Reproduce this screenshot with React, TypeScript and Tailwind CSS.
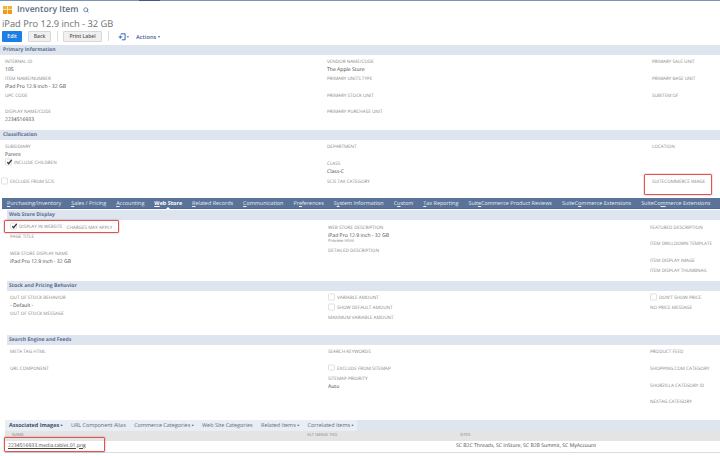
import type { ReactNode } from "react"
import { Search } from "lucide-react"

// Field label with an optional value below it
function Field({ label, value, className = "h-[16.8px]" }: { label: string; value?: string; className?: string }) {
  return (
    <div className={className}>
      <div className="h-[7px] text-[4.6px] leading-[7px] whitespace-nowrap text-[#7f7f7f]">{label}</div>
      {value && <div className="h-[7px] text-[5.1px] leading-[8px] whitespace-nowrap text-[#3d3d3d]">{value}</div>}
    </div>
  )
}

function Check({ label, checked = false, className = "h-[16.8px]" }: { label: string; checked?: boolean; className?: string }) {
  return (
    <div className={`flex items-start ${className}`}>
      <div className="relative mr-[2.5px] h-[6.5px] w-[6.5px] shrink-0 -translate-y-[1.5px] rounded-[1px] border border-[#e0e0e0] bg-white">
        {checked && (
          <svg viewBox="0 0 8 8" className="absolute -top-[1px] left-0 h-[7px] w-[7px]">
            <path d="M1.5 4.2 L3 6 L6.5 1.5" fill="none" stroke="#333" strokeWidth="1.5" />
          </svg>
        )}
      </div>
      <span className="text-[4.6px] leading-[7px] whitespace-nowrap text-[#7f7f7f]">{label}</span>
    </div>
  )
}

function SectionBar({ children, className = "" }: { children: ReactNode; className?: string }) {
  return (
    <div className={`flex h-[10px] items-center bg-[#dfe5ef] pt-[2px] text-[5.1px] font-bold text-[#5a6f91] ${className}`}>
      {children}
    </div>
  )
}

function Tab({ first, rest, pre = "", active = false }: { first: string; rest: string; pre?: string; active?: boolean }) {
  return (
    <span className={`relative whitespace-nowrap ${active ? "font-bold text-white" : "text-[#e8edf5]"}`}>
      {pre}
      <span className="underline">{first}</span>
      {rest}
      {active && (
        <span className="absolute -bottom-[1.5px] left-1/2 h-0 w-0 -translate-x-1/2 border-x-[2px] border-b-[2px] border-x-transparent border-b-white" />
      )}
    </span>
  )
}

function RedBox({ className }: { className: string }) {
  return <div className={`pointer-events-none absolute rounded-[1px] border border-[#e8504f] shadow-[0_0_2px_rgba(0,0,0,0.35)] ${className}`} />
}

export default function App() {
  return (
    <div className="relative h-[456px] w-[720px] overflow-hidden bg-white font-['Open_Sans',sans-serif] antialiased [text-rendering:geometricPrecision]">
      <div className="h-px bg-[#7d94b8]">
        <div className="ml-[139px] h-px w-[21px] bg-[#3f5a85]" />
      </div>

      {/* Page title */}
      <div className="flex h-[16px] items-center pt-[1px] pl-[3px]">
        <svg viewBox="0 0 9 8" className="h-[8px] w-[9px]">
          <rect x="0" y="0" width="4.2" height="3.4" fill="#f5b335" />
          <rect x="4.8" y="0" width="4.2" height="3.4" fill="#f5b335" />
          <rect x="0" y="4" width="4.2" height="4" fill="#ee9a1c" />
          <rect x="4.8" y="4" width="4.2" height="4" fill="#ee9a1c" />
        </svg>
        <span className="ml-[5px] text-[8.6px] font-semibold text-[#5b6a80]">Inventory Item</span>
        <Search className="ml-[5px] h-[6px] w-[6px] text-[#4d6a9a]" strokeWidth={3} />
      </div>
      <div className="h-[14px] pl-[2px] text-[9.3px] leading-[14px] text-[#6f6f6f]">iPad Pro 12.9 inch - 32 GB</div>

      {/* Buttons */}
      <div className="flex h-[14px] items-start pl-[2px] text-[5px] font-semibold">
        <button className="h-[11px] w-[20px] rounded-[1px] bg-[#1b7fe6] text-white">Edit</button>
        <button className="ml-[6px] h-[11px] w-[23px] rounded-[1px] border border-[#d8d8d8] bg-[#f0f0f0] text-[#555]">Back</button>
        <div className="mx-[5.5px] h-[10px] w-px bg-[#dcdcdc]" />
        <button className="h-[11px] w-[39px] rounded-[1px] border border-[#d8d8d8] bg-[#f0f0f0] text-[#555]">Print Label</button>
        <div className="mx-[6px] h-[10px] w-px bg-[#dcdcdc]" />
        <svg viewBox="0 0 14 10" className="ml-[2px] mt-[2px] h-[8px] w-[13px]">
          <path d="M4 2 V1 H9 V8.5 H5 M1 5 H5.5 M3 3.2 V7" fill="none" stroke="#2f5da8" strokeWidth="1.2" />
          <path d="M11 4 H14 L12.5 5.8 Z" fill="#4d6a9a" />
        </svg>
        <span className="ml-[6px] mt-[2px] flex items-center text-[5.7px] text-[#4d6a9a]">
          Actions
          <span className="ml-[1.5px] h-0 w-0 border-x-[1.5px] border-t-[2px] border-x-transparent border-t-[#4d6a9a]" />
        </span>
      </div>

      <SectionBar className="pl-[3px]">Primary Information</SectionBar>
      <div className="flex h-[75px] pt-[4px]">
        <div className="w-[327px] pl-[5px]">
          <Field label="INTERNAL ID" value="105" />
          <Field label="ITEM NAME/NUMBER" value="iPad Pro 12.9 inch - 32 GB" />
          <Field label="UPC CODE" />
          <Field label="DISPLAY NAME/CODE" value="2234516933" />
        </div>
        <div className="w-[325px]">
          <Field label="VENDOR NAME/CODE" value="The Apple Store" />
          <Field label="PRIMARY UNITS TYPE" />
          <Field label="PRIMARY STOCK UNIT" />
          <Field label="PRIMARY PURCHASE UNIT" />
        </div>
        <div>
          <Field label="PRIMARY SALE UNIT" />
          <Field label="PRIMARY BASE UNIT" />
          <Field label="SUBITEM OF" />
        </div>
      </div>

      <SectionBar className="pl-[3px]">Classification</SectionBar>
      <div className="flex h-[58px] pt-[4px]">
        <div className="w-[327px] pl-[5px]">
          <Field label="SUBSIDIARY" value="Parent" className="h-[16px]" />
          <Check label="INCLUDE CHILDREN" checked className="h-[19px]" />
          <div className="-ml-[4px]">
            <Check label="EXCLUDE FROM SCIS" />
          </div>
        </div>
        <div className="w-[325px]">
          <Field label="DEPARTMENT" className="h-[17px]" />
          <Field label="CLASS" value="Class-C" className="h-[18px]" />
          <Field label="SCIS TAX CATEGORY" />
        </div>
        <div>
          <Field label="LOCATION" className="h-[35px]" />
          <Field label="SUITECOMMERCE IMAGE" />
        </div>
      </div>

      {/* Subtabs */}
      <div className="ml-[2px] flex h-[11px] items-center gap-[10px] border-b border-[#4d6a9a] bg-[#5b7299] pl-[5px] text-[5.45px]">
        <Tab first="P" rest="urchasing/Inventory" />
        <Tab first="S" rest="ales / Pricing" />
        <Tab first="A" rest="ccounting" />
        <Tab first="W" rest="eb Store" active />
        <Tab first="R" rest="elated Records" />
        <Tab first="C" rest="ommunication" />
        <Tab pre="Pr" first="e" rest="ferences" />
        <Tab pre="S" first="y" rest="stem Information" />
        <Tab pre="C" first="u" rest="stom" />
        <Tab first="T" rest="ax Reporting" />
        <Tab pre="Suit" first="e" rest="Commerce Product Reviews" />
        <Tab pre="SuiteC" first="o" rest="mmerce Extensions" />
        <Tab pre="SuiteCo" first="m" rest="merce Extensions" />
      </div>

      <div className="ml-[7px] pt-[1px]">
        <SectionBar className="pl-[2px]">Web Store Display</SectionBar>
        <div className="flex h-[61px] pt-[3px]">
          <div className="w-[321px] pl-[3px]">
            <div className="flex h-[11px] pt-[1px]">
              <Check label="DISPLAY IN WEBSITE" checked className="h-[7px]" />
              <span className="ml-[4px] pt-[1px] text-[4.6px] leading-[7px] text-[#7f7f7f]">CHARGES MAY APPLY</span>
            </div>
            <Field label="PAGE TITLE" className="h-[16.5px]" />
            <Field label="WEB STORE DISPLAY NAME" value="iPad Pro 12.9 inch - 32 GB" />
          </div>
          <div className="w-[322px] pt-[1.5px]">
            <Field label="WEB STORE DESCRIPTION" value="iPad Pro 12.9 inch - 32 GB" className="h-[14px]" />
            <div className="h-[9.5px] text-[4.2px] leading-[6px] text-[#7f7f7f]">Preview Html</div>
            <Field label="DETAILED DESCRIPTION" />
          </div>
          <div className="pt-[1.5px]">
            <Field label="FEATURED DESCRIPTION" />
            <Field label="ITEM DRILLDOWN TEMPLATE" />
            <Field label="ITEM DISPLAY IMAGE" className="h-[10px]" />
            <Field label="ITEM DISPLAY THUMBNAIL" />
          </div>
        </div>

        <SectionBar className="pl-[2px]">Stock and Pricing Behavior</SectionBar>
        <div className="flex h-[44px] pt-[4px]">
          <div className="w-[321px] pl-[3px]">
            <Field label="OUT OF STOCK BEHAVIOR" value="- Default -" className="h-[16px]" />
            <Field label="OUT OF STOCK MESSAGE" />
          </div>
          <div className="w-[322px]">
            <Check label="VARIABLE AMOUNT" className="h-[10px]" />
            <Check label="SHOW DEFAULT AMOUNT" className="h-[10px]" />
            <Field label="MAXIMUM VARIABLE AMOUNT" />
          </div>
          <div>
            <Check label="DON'T SHOW PRICE" className="h-[9.5px]" />
            <Field label="NO PRICE MESSAGE" />
          </div>
        </div>

        <SectionBar className="pl-[2px]">Search Engine and Feeds</SectionBar>
        <div className="flex h-[75px] pt-[4px]">
          <div className="w-[321px] pl-[3px]">
            <Field label="META TAG HTML" />
            <Field label="URL COMPONENT" />
          </div>
          <div className="w-[322px]">
            <Field label="SEARCH KEYWORDS" />
            <Check label="EXCLUDE FROM SITEMAP" className="h-[10px]" />
            <Field label="SITEMAP PRIORITY" value="Auto" />
          </div>
          <div>
            <Field label="PRODUCT FEED" />
            <Field label="SHOPPING.COM CATEGORY" />
            <Field label="SHORZILLA CATEGORY ID" />
            <Field label="NEXTAG CATEGORY" />
          </div>
        </div>
      </div>

      {/* Associated images sublist */}
      <div className="ml-[5px]">
        <div className="flex h-[11px] items-center bg-[#dfe5ef] text-[5.45px] text-[#5f6b7e]">
          <div className="flex h-full items-center gap-[8.5px] bg-[#e9edf4] pl-[4px] pr-[4px]">
            <span className="font-bold text-[#3f4f68]">Associated Images ▪</span>
            <span>URL Component Alias</span>
            <span>Commerce Categories ▪</span>
            <span>Web Site Categories</span>
            <span>Related Items ▪</span>
            <span>Correlated Items ▪</span>
          </div>
        </div>
        <div className="flex h-[10px] items-center bg-[#e4e4e4] text-[4.2px] text-[#888]">
          <span className="w-[302px] pl-[7px]">NAME</span>
          <span className="w-[153px]">ALT IMAGE TAG</span>
          <span>SITES</span>
        </div>
        <div className="flex h-[12px] items-center border-b border-[#dcdcdc] text-[5.1px] text-[#444]">
          <span className="w-[451px] pl-[3px] underline">2234516933.media.tablet.01.png</span>
          <span>SC B2C Threads, SC InStore, SC B2B Summit, SC MyAccount</span>
        </div>
      </div>

      {/* Annotation boxes */}
      <RedBox className="left-[644px] top-[174px] h-[21px] w-[68px]" />
      <RedBox className="left-[4px] top-[220px] h-[13px] w-[114.5px]" />
      <RedBox className="left-[4px] top-[436.5px] h-[15.5px] w-[101px]" />
    </div>
  )
}
